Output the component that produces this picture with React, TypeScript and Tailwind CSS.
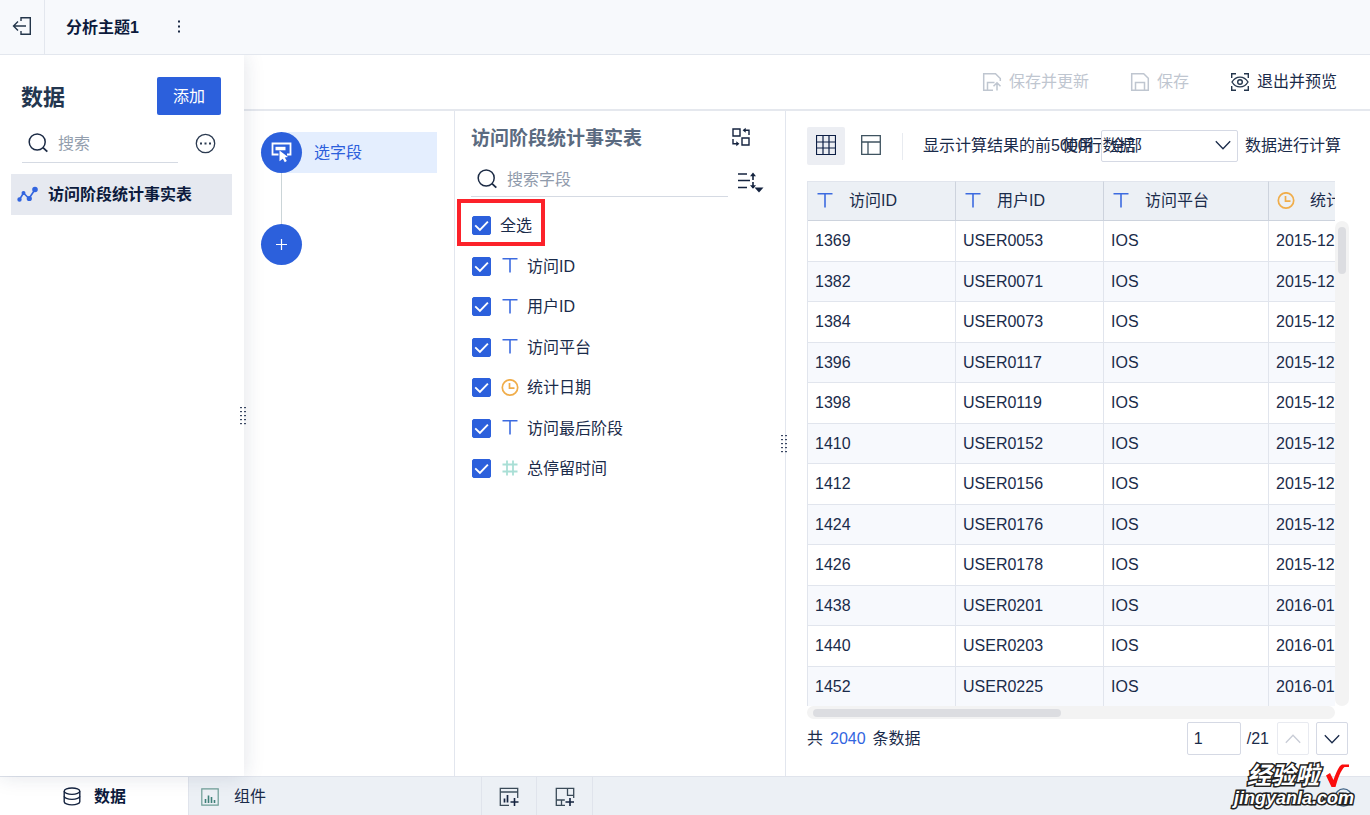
import { useState } from "react";

type FieldType = "text" | "date" | "number";

const fields: { name: string; type: FieldType }[] = [
  { name: "访问ID", type: "text" },
  { name: "用户ID", type: "text" },
  { name: "访问平台", type: "text" },
  { name: "统计日期", type: "date" },
  { name: "访问最后阶段", type: "text" },
  { name: "总停留时间", type: "number" },
];

const rows = [
  ["1369", "USER0053", "IOS", "2015-12-01"],
  ["1382", "USER0071", "IOS", "2015-12-02"],
  ["1384", "USER0073", "IOS", "2015-12-02"],
  ["1396", "USER0117", "IOS", "2015-12-05"],
  ["1398", "USER0119", "IOS", "2015-12-05"],
  ["1410", "USER0152", "IOS", "2015-12-08"],
  ["1412", "USER0156", "IOS", "2015-12-08"],
  ["1424", "USER0176", "IOS", "2015-12-10"],
  ["1426", "USER0178", "IOS", "2015-12-10"],
  ["1438", "USER0201", "IOS", "2016-01-03"],
  ["1440", "USER0203", "IOS", "2016-01-03"],
  ["1452", "USER0225", "IOS", "2016-01-05"],
];

function TypeIcon({ type }: { type: FieldType }) {
  if (type === "date") {
    return (
      <svg className="size-[18px] shrink-0" viewBox="0 0 18 18" fill="none" stroke="#f0ad4a" strokeWidth="1.7">
        <circle cx="9" cy="8.5" r="7.7" />
        <path d="M8.5 4v5.2h5" />
      </svg>
    );
  }
  if (type === "number") {
    return (
      <svg className="size-[18px] shrink-0" viewBox="0 0 18 18" fill="none" stroke="#a9dfd6" strokeWidth="1.8">
        <path d="M6 .5v15M12 .5v15M1.5 4.5h15M1.5 11.5h15" />
      </svg>
    );
  }
  return (
    <svg className="size-[18px] shrink-0" viewBox="0 0 18 18" fill="none" stroke="#3c6be0" strokeWidth="1.6">
      <path d="M1.5 1.8h15M9 1.8v13.7" />
    </svg>
  );
}

function SearchIcon() {
  return (
    <svg className="size-5 shrink-0" viewBox="0 0 20 20" fill="none" stroke="#1c2b45" strokeWidth="1.5">
      <circle cx="9.2" cy="9" r="8" />
      <path d="M15 14.6l4.3 4" strokeWidth="1.8" />
    </svg>
  );
}

function Chevron({ up = false }: { up?: boolean }) {
  return (
    <svg className="h-[10px] w-4" viewBox="0 0 16 10" fill="none" stroke="currentColor" strokeWidth="1.3">
      <path d={up ? "M.8 8.7L8 1.3l7.2 7.4" : "M.8 1.3L8 8.7l7.2-7.4"} />
    </svg>
  );
}

function DragHandle() {
  return (
    <svg className="absolute top-1/2 -right-[2px] z-20 h-[18px] w-[6px] -translate-y-1/2" viewBox="0 0 6 18" fill="#3a4763">
      {[0, 4, 8, 12, 16].map((y) => (
        <g key={y}>
          <rect x="0" y={y} width="2" height="1.2" />
          <rect x="4" y={y} width="2" height="1.2" />
        </g>
      ))}
    </svg>
  );
}

function Check({ label, checked, onChange, type }: { label: string; checked: boolean; onChange: () => void; type?: FieldType }) {
  return (
    <label className="flex h-full items-center">
      <span className="relative size-[19px] shrink-0">
        <input
          type="checkbox"
          checked={checked}
          onChange={onChange}
          className="block size-[19px] appearance-none rounded-xs border border-[#c5cad6] checked:border-[#2c60dc] checked:bg-[#2c60dc]"
        />
        {checked && (
          <svg className="pointer-events-none absolute inset-0 size-[19px]" viewBox="0 0 19 19" fill="none" stroke="#fff" strokeWidth="1.9">
            <path d="M3.2 9.4l4.7 4.5 8-8.2" />
          </svg>
        )}
      </span>
      {type && (
        <span className="ml-[10px]">
          <TypeIcon type={type} />
        </span>
      )}
      <span className={type ? "ml-2 pt-px" : "ml-[9px] pt-px"}>{label}</span>
    </label>
  );
}

export default function App() {
  const [checked, setChecked] = useState<string[]>(fields.map((f) => f.name));
  const allChecked = checked.length === fields.length;

  const toggle = (name: string) =>
    setChecked(checked.includes(name) ? checked.filter((n) => n !== name) : [...checked, name]);

  return (
    <div className="relative flex h-screen w-full flex-col overflow-hidden bg-white font-['Liberation_Sans','Noto_Sans_CJK_SC',sans-serif] text-base leading-6 text-[#1a2b4a]">
      <header className="relative z-20 flex h-[55px] shrink-0 items-center border-b border-[#e3e7ee] bg-[#f7f9fc]">
        <button aria-label="返回" className="flex h-full w-[45px] items-center justify-center border-r border-[#e3e7ee] pb-[2px]">
          <svg className="size-5" viewBox="0 0 20 20" fill="none" stroke="#24364a" strokeWidth="1.4">
            <path d="M9 5V1.7h9.3v16.6H9V15" />
            <path d="M14 10H1.5M6 5.5L1.5 10 6 14.5" />
          </svg>
        </button>
        <h1 className="ml-[21px] pt-[2px] font-bold text-[#0c1a3c]">分析主题1</h1>
        <button aria-label="更多" className="ml-7 flex w-6 justify-center">
          <svg className="h-4 w-1" viewBox="0 0 4 16" fill="#1c2b45">
            <rect x="1" y="1.5" width="2" height="2" />
            <rect x="1" y="6.5" width="2" height="2" />
            <rect x="1" y="11.5" width="2" height="2" />
          </svg>
        </button>
      </header>

      <div className="flex min-h-0 flex-1">
        <aside className="relative z-10 w-[244px] shrink-0 bg-white shadow-[0_0_20px_rgba(20,40,80,0.13)]">
          <div className="flex items-center justify-between pt-[22px] pr-[23px] pl-[21px]">
            <h2 className="pt-[3px] text-[22px] font-bold text-[#23364f]">数据</h2>
            <button className="h-[38px] w-16 rounded-xs bg-[#2c60dc] pt-px text-white">添加</button>
          </div>
          <div className="mt-[9px] flex items-center justify-between pr-[28px] pl-[22px]">
            <label className="flex h-[39px] w-[156px] items-center border-b border-[#d5dae3] pl-[6px]">
              <SearchIcon />
              <input aria-label="搜索" placeholder="搜索" className="ml-[10px] w-full min-w-0 pt-[2px] outline-none placeholder:text-[#939ead]" />
            </label>
            <button aria-label="更多操作">
              <svg className="size-[21px]" viewBox="0 0 21 21" fill="none" stroke="#2b3a50" strokeWidth="1.3">
                <circle cx="10.5" cy="10.5" r="9.2" />
                <path d="M5 10.5h2M9.5 10.5h2M14 10.5h2" strokeWidth="1.8" />
              </svg>
            </button>
          </div>
          <button className="mx-[11px] mt-[11px] flex h-[41px] w-[221px] items-center bg-[#e6e9f0] pl-[6px] font-bold text-[#0c1a3c]">
            <svg className="h-[18px] w-[21px]" viewBox="0 0 21 18" fill="#3265df" stroke="#3265df" strokeWidth="1.6">
              <path d="M2.5 13.5L6.5 7l5.5 5.5L18 3.5" fill="none" />
              <circle cx="2.5" cy="13.5" r="1.4" />
              <circle cx="6.5" cy="7" r="1.2" />
              <circle cx="12.3" cy="12.5" r="1.8" />
              <circle cx="18" cy="3.5" r="2" />
            </svg>
            <span className="ml-[10px] pt-px">访问阶段统计事实表</span>
          </button>
          <DragHandle />
        </aside>

        <div className="flex min-w-0 flex-1 flex-col">
          <div className="flex h-14 shrink-0 items-center justify-end gap-[41px] border-b-2 border-[#e5e8ee] pr-[33px]">
            <button disabled className="flex items-center gap-[7px] text-[#bfc6d0]">
              <svg className="size-5" viewBox="0 0 20 20" fill="none" stroke="currentColor" strokeWidth="1.5">
                <path d="M11 18.3H1.7V1.7h11.8l4.8 4.8V9" />
                <path d="M5.5 18v-7.5h7M15 18.5v-7.5M11.5 14.3l3.5-3.5 3.5 3.5" />
              </svg>
              保存并更新
            </button>
            <button disabled className="flex items-center gap-[7px] text-[#bfc6d0]">
              <svg className="size-5" viewBox="0 0 20 20" fill="none" stroke="currentColor" strokeWidth="1.5">
                <path d="M1.7 1.7h12l4.6 4.6v12H1.7z" />
                <path d="M5.5 18v-7.5h9V18" />
              </svg>
              保存
            </button>
            <button className="flex items-center gap-[7px]">
              <svg className="size-5" viewBox="0 0 20 20" fill="none" stroke="#25364d" strokeWidth="1.4">
                <path d="M1.7 6V1.7H6M14 1.7h4.3V6M18.3 14v4.3H14M6 18.3H1.7V14" />
                <path d="M2 10C6 3.5 14 3.5 18 10 14 16.5 6 16.5 2 10z" />
                <circle cx="10" cy="10" r="2.3" />
              </svg>
              退出并预览
            </button>
          </div>

          <div className="flex min-h-0 flex-1">
            <section className="w-[211px] shrink-0 border-r border-[#e2e6ee] pt-[21px] pr-[17px] pl-[17px]">
              <button className="flex h-[41px] w-full items-center rounded-r-[3px] rounded-l-full bg-[#e4eefe] text-[#2c60dc]">
                <span className="flex size-[41px] items-center justify-center rounded-full bg-[#2c60dc]">
                  <svg className="size-[21px]" viewBox="0 0 21 21" fill="none" stroke="#fff" strokeWidth="1.8">
                    <path d="M7.5 12.5H1.5V1.5h18v11H16" />
                    <path d="M4.5 4.8h10v3.5h-10z" fill="#fff" stroke="none" />
                    <path d="M8.5 8.5l8.5 6.5-3.2.6 2 3.4-2 1.2-2-3.5-3.3 2.5z" fill="#fff" stroke="none" />
                  </svg>
                </span>
                <span className="ml-3 pt-px">选字段</span>
              </button>
              <div className="ml-5 h-[51px] w-px bg-[#cbd5d8]" />
              <button aria-label="添加步骤" className="flex size-[41px] items-center justify-center rounded-full bg-[#2c60dc]">
                <svg className="size-[11px]" viewBox="0 0 11 11" stroke="#fff" strokeWidth="1.2">
                  <path d="M0 5.5h11M5.5 0v11" />
                </svg>
              </button>
            </section>

            <section className="relative w-[331px] shrink-0 border-r border-[#e2e6ee] pt-3 pl-4">
              <div className="flex items-center justify-between pr-[34px]">
                <h2 className="text-[19px] leading-8 font-bold text-[#5a6a80]">访问阶段统计事实表</h2>
                <button aria-label="切换" className="pb-[4px]">
                  <svg className="size-5" viewBox="0 0 20 20" fill="none" stroke="#14233f" strokeWidth="1.4">
                    <path d="M2 2h7v7H2zM11 11h7v7h-7z" />
                    <path d="M18 8V3.3h-5M2 12v4.7h5" />
                    <path d="M14.7.8v5L11.6 3.3zM5.3 14.2v5l3.1-2.5z" fill="#14233f" stroke="none" />
                  </svg>
                </button>
              </div>
              <div className="flex items-center justify-between pr-[21px]">
                <label className="flex h-[42px] w-[257px] items-center border-b border-[#d5dae3] pt-[6px] pl-[6px]">
                  <SearchIcon />
                  <input aria-label="搜索字段" placeholder="搜索字段" className="ml-[10px] w-full min-w-0 pt-[2px] outline-none placeholder:text-[#8f9aab]" />
                </label>
                <button aria-label="排序" className="pt-3">
                  <svg className="h-[22px] w-[27px]" viewBox="0 0 27 22" fill="none" stroke="#14233f" strokeWidth="1.6">
                    <path d="M1 3h9M1 9.5h12M1 16.5h9M16 3v6M16 11v6" />
                    <path d="M13 5.2L16 1.5l3 3.7zM13 14.2l3 3.6 3-3.6z" fill="#14233f" stroke="none" />
                    <path d="M17.5 16.5h9L22 21.5z" fill="#14233f" stroke="none" />
                  </svg>
                </button>
              </div>

              <ul className="mt-2 pl-px">
                <li className="relative h-[41px]">
                  <Check
                    label="全选"
                    checked={allChecked}
                    onChange={() => setChecked(allChecked ? [] : fields.map((f) => f.name))}
                  />
                  <div className="pointer-events-none absolute -top-[6px] -left-[15px] h-[47px] w-[88px] border-4 border-[#fc222a]" />
                </li>
                {fields.map((f) => (
                  <li key={f.name} className="h-[41px] even:h-10">
                    <Check label={f.name} type={f.type} checked={checked.includes(f.name)} onChange={() => toggle(f.name)} />
                  </li>
                ))}
              </ul>
              <DragHandle />
            </section>

            <main className="flex min-w-0 flex-1 flex-col px-[21px] pt-4">
              <div className="flex h-[38px] shrink-0 items-center pr-2">
                <button aria-label="表格视图" className="flex size-[38px] shrink-0 items-center justify-center rounded-xs bg-[#eceef3] pb-[2px]">
                  <svg className="size-5" viewBox="0 0 20 20" fill="none" stroke="#0d1f45" strokeWidth="1.2">
                    <path d="M.5.5h19v19H.5zM.5 7h19M.5 13h19M7 .5v19M13 .5v19" />
                  </svg>
                </button>
                <button aria-label="列视图" className="ml-[7px] flex size-[38px] shrink-0 items-center justify-center pb-[2px]">
                  <svg className="size-5" viewBox="0 0 20 20" fill="none" stroke="#3f5360" strokeWidth="1.3">
                    <path d="M.7.7h18.6v18.6H.7zM.7 7h18.6M7 7v12" />
                  </svg>
                </button>
                <div className="ml-3 h-[27px] w-px shrink-0 bg-[#e8ebf0]" />
                <p className="ml-5 min-w-0 flex-1 whitespace-nowrap">显示计算结果的前5000行数据</p>
                <label htmlFor="scope" className="shrink-0">使用</label>
                <span className="relative mx-[7px] h-8 w-[137px] shrink-0">
                  <select id="scope" className="size-full appearance-none rounded-xs border border-[#d5d9e4] pl-2">
                    <option>全部</option>
                  </select>
                  <span className="pointer-events-none absolute top-[10px] right-[7px] flex">
                    <Chevron />
                  </span>
                </span>
                <span className="shrink-0">数据进行计算</span>
              </div>

              <div className="mt-4 flex min-h-0 flex-1">
                <div className="min-w-0 flex-1 overflow-hidden">
                  <table className="w-[628px] table-fixed border-separate border-spacing-0 border-l border-[#e1e5ed] text-left">
                    <colgroup>
                      <col className="w-[148px]" />
                      <col className="w-[148px]" />
                      <col className="w-[165px]" />
                      <col />
                    </colgroup>
                    <thead>
                      <tr>
                        {fields.slice(0, 4).map((f) => (
                          <th key={f.name} className="h-10 border-t border-r border-b border-t-[#e1e5ed] border-r-[#cdd3dd] border-b-[#cdd3dd] bg-[#ecf0f5] p-0 font-normal">
                            <div className="flex items-center gap-[15px] pl-2">
                              <TypeIcon type={f.type} />
                              {f.name}
                            </div>
                          </th>
                        ))}
                      </tr>
                    </thead>
                    <tbody>
                      {rows.map((row) => (
                        <tr key={row[0]} className="h-[41px] even:h-10 even:bg-[#f7f9fd]">
                          {row.map((cell, i) => (
                            <td key={i} className="border-r border-b border-[#e1e5ed] py-0 pl-[7px]">{cell}</td>
                          ))}
                        </tr>
                      ))}
                    </tbody>
                  </table>
                </div>
                <div className="mt-10 w-[14px] shrink-0 rounded-full bg-[#f3f3f3] px-[3px] pt-[6px]">
                  <div className="h-[47px] rounded-full bg-[#dcdde1]" />
                </div>
              </div>
              <div className="mr-[14px] h-[13px] shrink-0 rounded-full bg-[#f3f3f3] px-[6px] pt-[3px]">
                <div className="h-2 w-[48%] rounded-full bg-[#dcdde1]" />
              </div>

              <div className="flex shrink-0 items-center pt-[3px] pr-px pb-[21px]">
                <p>
                  共<span className="mx-[7px] text-[#3265df]">2040</span>条数据
                </p>
                <input aria-label="页码" defaultValue="1" className="ml-auto h-[33px] w-[54px] rounded-xs border border-[#d5d9e4] px-[6px]" />
                <span className="ml-[6px]">/21</span>
                <button disabled aria-label="上一页" className="ml-2 flex h-[33px] w-8 items-center justify-center rounded-xs border border-[#e8eaf0] text-[#c8ccd6]">
                  <Chevron up />
                </button>
                <button aria-label="下一页" className="ml-[7px] flex h-[33px] w-8 items-center justify-center rounded-xs border border-[#d5d9e4]">
                  <Chevron />
                </button>
              </div>
            </main>
          </div>
        </div>
      </div>

      <footer className="flex h-[39px] shrink-0 border-t border-[#e0e4ec] bg-[#ecf0f5]">
        <button className="flex w-[188px] items-center justify-center gap-3 bg-white pt-px font-bold text-[#0c1a3c]">
          <svg className="size-5" viewBox="0 0 20 20" fill="none" stroke="#14233f" strokeWidth="1.4">
            <ellipse cx="10" cy="4.2" rx="7.8" ry="3.2" />
            <path d="M2.2 4.2v10.5c0 1.8 3.5 3.2 7.8 3.2s7.8-1.4 7.8-3.2V4.2" />
            <path d="M2.2 9.2c0 1.8 3.5 3.2 7.8 3.2s7.8-1.4 7.8-3.2" />
          </svg>
          数据
        </button>
        <button className="flex w-[294px] items-center gap-[15px] border-x border-[#e0e4ec] pt-px pl-3">
          <svg className="size-[18px]" viewBox="0 0 18 18" fill="none" stroke="#6d9d96" strokeWidth="1.2">
            <path d="M.8.8h16.4v16.4H.8z" />
            <path d="M4.5 15v-4M7.5 15V7.5M10.5 15V9M13.5 15v-3" stroke="#3f8078" strokeWidth="1.6" />
          </svg>
          组件
        </button>
        <button aria-label="新建组件" className="flex w-[55px] items-center justify-center border-r border-[#e0e4ec] pt-px">
          <svg className="size-5" viewBox="0 0 20 20" fill="none" stroke="#3a4a58" strokeWidth="1.3">
            <path d="M10 18.3H1.3V1.3h17.4V11M1.3 5h17.4" />
            <path d="M5.5 15.5v-4M8.5 15.5V8" stroke="#14233f" strokeWidth="1.7" />
            <path d="M11.5 15h8M15.5 11v8" stroke="#14233f" strokeWidth="1.6" />
          </svg>
        </button>
        <button aria-label="新建仪表板" className="flex w-14 items-center justify-center border-r border-[#e0e4ec] pt-px">
          <svg className="size-5" viewBox="0 0 20 20" fill="none" stroke="#3a4a58" strokeWidth="1.3">
            <path d="M10 18.3H1.3V1.3h17.4V11M12.5 1.3v7h6M1.3 13h8.5M6.5 13v5" />
            <path d="M10.5 15h8.5M15 11v8" stroke="#14233f" strokeWidth="1.6" />
          </svg>
        </button>
        <button aria-label="帮助" className="mr-[17px] ml-auto pt-[3px]">
          <svg className="size-[19px]" viewBox="0 0 19 19" fill="none" stroke="#3f6386" strokeWidth="1.4">
            <circle cx="9.5" cy="9.5" r="8.6" />
          </svg>
        </button>
      </footer>

      <div className="pointer-events-none absolute right-4 bottom-[7px] z-30 text-right font-bold text-white italic [paint-order:stroke] [-webkit-text-stroke:3px_#222]">
        <div className="flex items-center justify-end gap-[6px] pr-[5px] text-[24px] leading-4">
          经验啦
          <svg className="size-6" viewBox="0 0 24 24" fill="#fb0d0d">
            <path d="M1 11.5l4-2.5 3.5 7C11 9 14 1.5 17 .5h7V3H19.500C16 6 13 14 10.5 23H6.5z" />
          </svg>
        </div>
        <div className="text-[18px] leading-5">jingyanla.com</div>
      </div>
    </div>
  );
}
